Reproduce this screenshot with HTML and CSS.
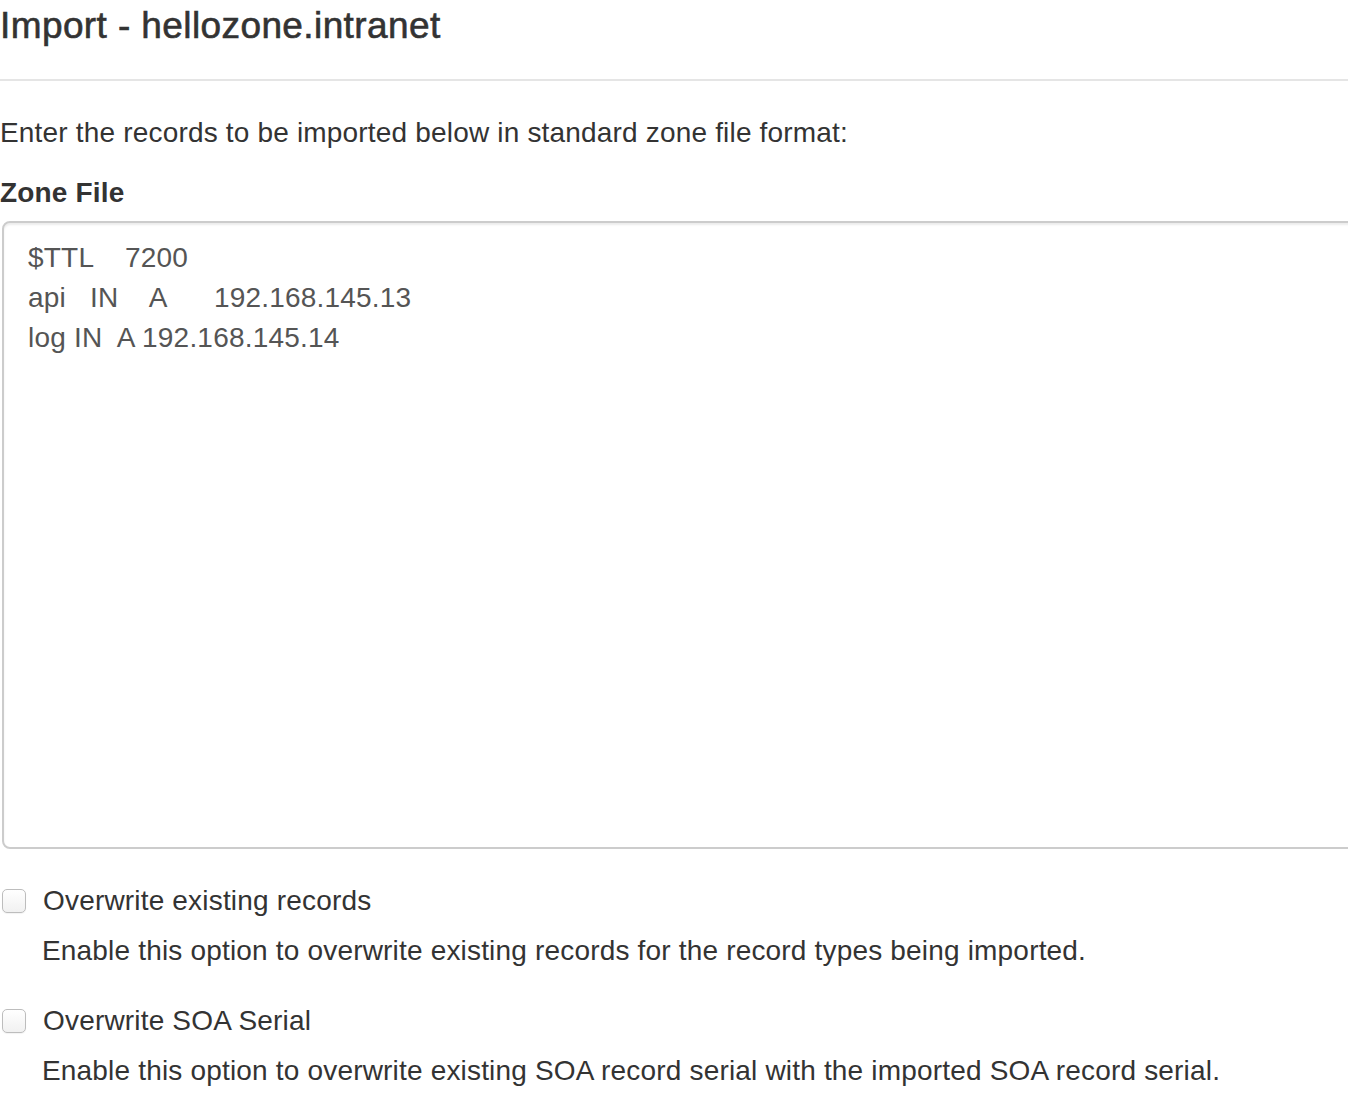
FILE: index.html
```html
<!DOCTYPE html>
<html lang="en">
<head>
    <meta charset="UTF-8">
    <meta name="viewport" content="width=device-width, initial-scale=1.0">
    <title>Import - hellozone.intranet</title>
    <link rel="stylesheet" href="styles.css">
</head>
<body>
    <div class="modal-header">
        <h4 class="modal-title">Import - hellozone.intranet</h4>
    </div>

    <div class="modal-body">
        <p class="intro">Enter the records to be imported below in standard zone file format:</p>

        <div class="form-group">
            <label class="control-label" for="zoneFile">Zone File</label>
            <textarea class="form-control" id="zoneFile" spellcheck="false">$TTL    7200
api   IN    A      192.168.145.13
log IN  A 192.168.145.14</textarea>
        </div>

        <div class="checkbox">
            <label>
                <span class="check-box"></span>
                Overwrite existing records
            </label>
        </div>
        <p class="help-block">Enable this option to overwrite existing records for the record types being imported.</p>

        <div class="checkbox">
            <label>
                <span class="check-box"></span>
                Overwrite SOA Serial
            </label>
        </div>
        <p class="help-block">Enable this option to overwrite existing SOA record serial with the imported SOA record serial.</p>
    </div>
</body>
</html>
```

FILE: styles.css
```css
html,
body {
    margin: 0;
    overflow: hidden;
}

body {
    font-family: "Liberation Sans", Arial, Helvetica, sans-serif;
    font-size: 28px;
    line-height: 40px;
    letter-spacing: 0.18px;
    color: #333;
    background-color: #fff;
}

.modal-header {
    padding-bottom: 27px;
    border-bottom: 2px solid #e5e5e5;
}

.modal-title {
    margin: 0;
    font-size: 37px;
    line-height: 52px;
    font-weight: 500;
    letter-spacing: 0.4px;
    -webkit-text-stroke: 0.6px #333;
}

.modal-body {
    padding-top: 32px;
}

.intro {
    margin: 0 0 20px;
}

.form-group {
    margin-bottom: 32px;
}

.control-label {
    display: block;
    font-weight: bold;
    margin-bottom: 8px;
}

.form-control {
    display: block;
    box-sizing: border-box;
    width: 1400px;
    height: 628px;
    margin-left: 2px;
    padding: 15px 24px 12px;
    font-family: inherit;
    font-size: 28px;
    line-height: 40px;
    letter-spacing: 0.2px;
    color: #555;
    background-color: #fff;
    border: 2px solid #ccc;
    border-radius: 8px;
    box-shadow: inset 0 2px 2px rgba(0, 0, 0, 0.075);
    resize: none;
    outline: none;
}

.checkbox {
    margin: 0;
}

.checkbox label {
    display: flex;
    align-items: center;
    gap: 17px;
}

.check-box {
    width: 24px;
    height: 24px;
    margin-left: 2px;
    box-sizing: border-box;
    border: 1px solid #bdbdbd;
    border-radius: 5px;
    background: linear-gradient(#fff, #f1f1f1);
    box-shadow: 0 1px 1px rgba(0, 0, 0, 0.05);
}

.help-block {
    margin: 10px 0 30px 42px;
}
```
